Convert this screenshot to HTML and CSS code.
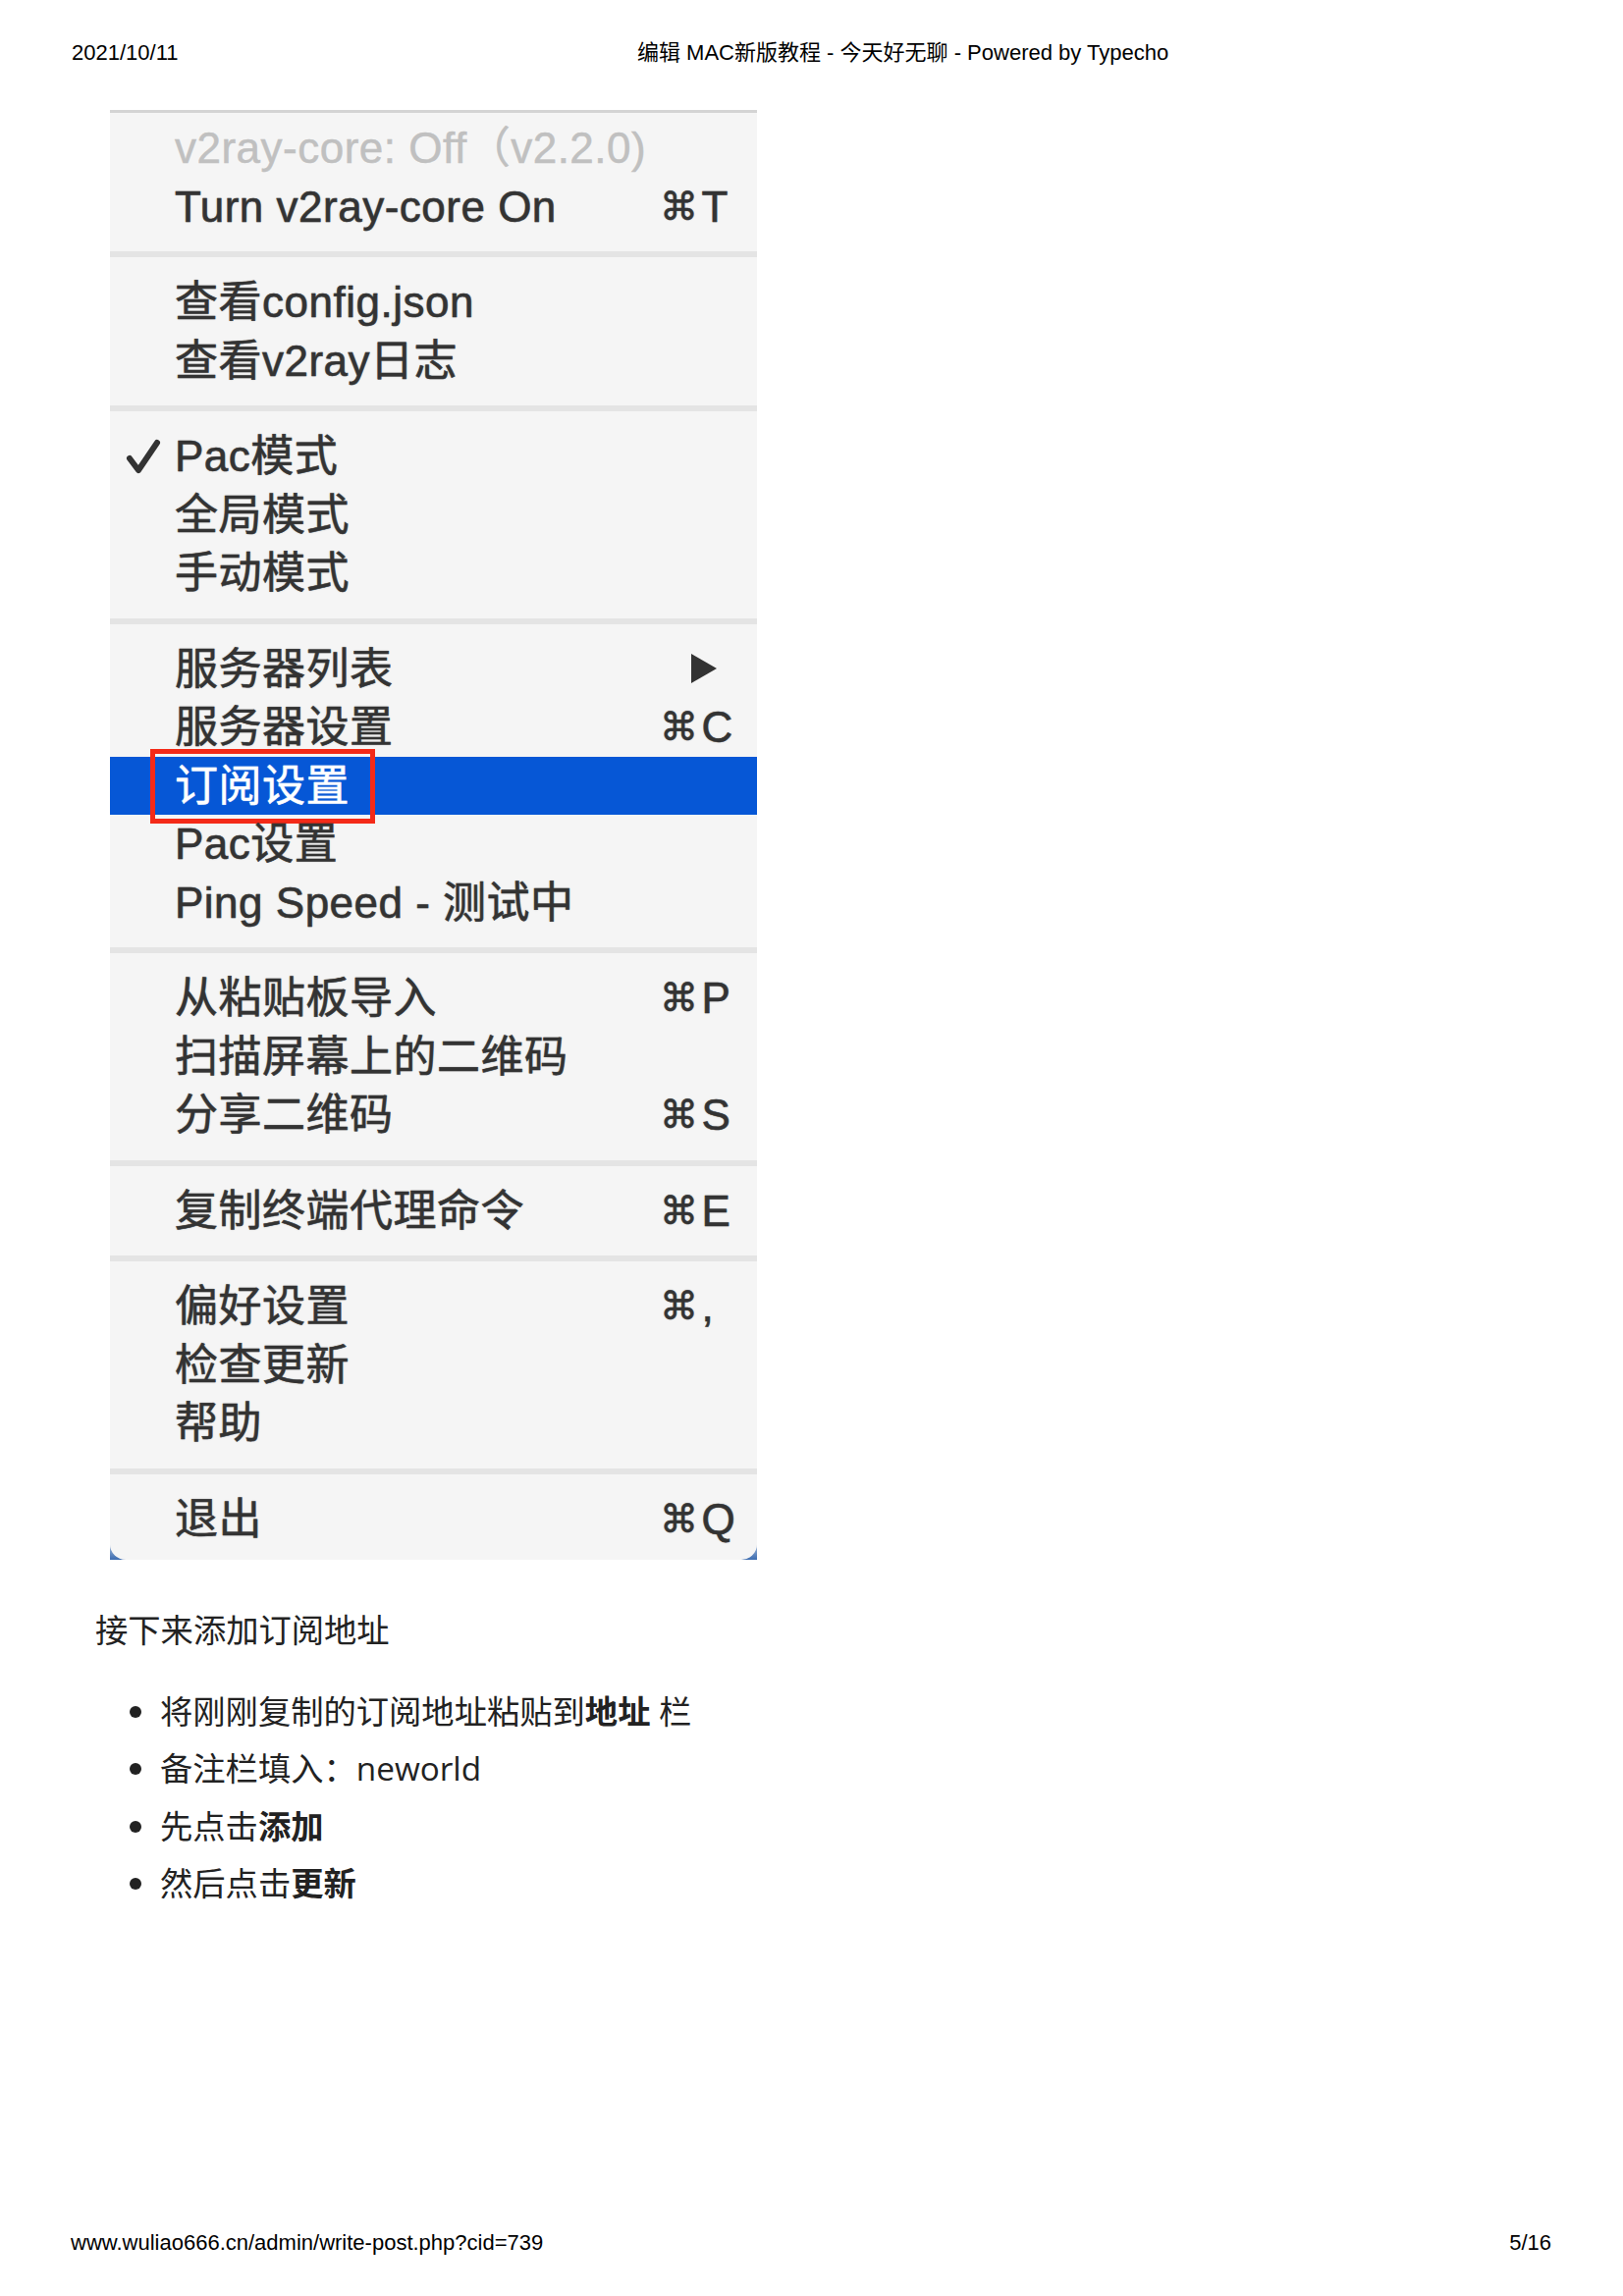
FILE: index.html
```html
<!DOCTYPE html>
<html lang="zh-CN">
<head>
    <meta charset="UTF-8">
    <title>编辑 MAC新版教程 - 今天好无聊 - Powered by Typecho</title>
    <link rel="stylesheet" href="styles.css">
</head>
<body>
<div class="page">

    <header class="print-header">
        <span>2021/10/11</span>
        <span>编辑 MAC新版教程 - 今天好无聊 - Powered by Typecho</span>
    </header>

    <main class="post">
        <!-- screenshot of the V2RayX status menu -->
        <div class="shot">
            <div class="menu">
                <div class="item disabled"><span class="label">v2ray-core: Off（v2.2.0)</span></div>
                <div class="item"><span class="label">Turn v2ray-core On</span><span class="key"><span class="cmd">⌘</span>T</span></div>
                <div class="sep"></div>
                <div class="item"><span class="label">查看config.json</span></div>
                <div class="item"><span class="label">查看v2ray日志</span></div>
                <div class="sep"></div>
                <div class="item">
                    <span class="mark">
                        <svg width="36" height="38" viewBox="0 0 36 38"><path d="M4 21 L13 33 L32 5" fill="none" stroke="#333" stroke-width="6" stroke-linecap="round" stroke-linejoin="round"/></svg>
                    </span>
                    <span class="label">Pac模式</span>
                </div>
                <div class="item"><span class="label">全局模式</span></div>
                <div class="item"><span class="label">手动模式</span></div>
                <div class="sep"></div>
                <div class="item"><span class="label">服务器列表</span><span class="key"><span class="arrow"></span></span></div>
                <div class="item"><span class="label">服务器设置</span><span class="key"><span class="cmd">⌘</span>C</span></div>
                <div class="item active"><span class="label">订阅设置</span><span class="callout"></span></div>
                <div class="item"><span class="label">Pac设置</span></div>
                <div class="item"><span class="label">Ping Speed - 测试中</span></div>
                <div class="sep"></div>
                <div class="item"><span class="label">从粘贴板导入</span><span class="key"><span class="cmd">⌘</span>P</span></div>
                <div class="item"><span class="label">扫描屏幕上的二维码</span></div>
                <div class="item"><span class="label">分享二维码</span><span class="key"><span class="cmd">⌘</span>S</span></div>
                <div class="sep"></div>
                <div class="item"><span class="label">复制终端代理命令</span><span class="key"><span class="cmd">⌘</span>E</span></div>
                <div class="sep"></div>
                <div class="item"><span class="label">偏好设置</span><span class="key"><span class="cmd">⌘</span>,</span></div>
                <div class="item"><span class="label">检查更新</span></div>
                <div class="item"><span class="label">帮助</span></div>
                <div class="sep"></div>
                <div class="item"><span class="label">退出</span><span class="key"><span class="cmd">⌘</span>Q</span></div>
            </div>
        </div>

        <p>接下来添加订阅地址</p>
        <ul>
            <li>将刚刚复制的订阅地址粘贴到<strong>地址</strong> 栏</li>
            <li>备注栏填入：neworld</li>
            <li>先点击<strong>添加</strong></li>
            <li>然后点击<strong>更新</strong></li>
        </ul>
    </main>

    <footer class="print-footer">
        <span>www.wuliao666.cn/admin/write-post.php?cid=739</span>
        <span>5/16</span>
    </footer>

</div>
</body>
</html>
```

FILE: styles.css
```css
/* Page */
body {
    margin: 0;
    background: #fff;
    color: #000;
}

.page {
    min-height: 2339px;
    display: flex;
    flex-direction: column;
}

/* print header / footer */
.print-header,
.print-footer {
    font-family: "Liberation Sans", "Noto Sans CJK SC", sans-serif;
    font-size: 22px;
    line-height: 24px;
}

.print-header {
    display: grid;
    grid-template-columns: 576px auto;
    padding: 42px 0 0 73px;
}

.print-footer {
    display: flex;
    justify-content: space-between;
    margin-top: auto;
    padding: 0 73px 42px 72px;
}

/* Post body */
.post {
    padding-left: 97px;
    font-family: "Open Sans", "Noto Sans CJK SC", sans-serif;
    font-size: 33.3px;
    color: #222;
}

.post p {
    margin: 42px 0 0;
    line-height: 58.6px;
}

.post ul {
    margin: 24px 0 0;
    padding-left: 66px;
}

.post li {
    line-height: 58.6px;
}

.post strong {
    font-weight: 700;
}

/* Menu screenshot */
.shot {
    width: 659px;
    margin: 46px 0 0 15px;
    background: linear-gradient(#fff 0, #fff calc(100% - 20px), #7f9fca calc(100% - 10px), #3c6cb0 100%);
}

.menu {
    background: #f5f5f5;
    border-top: 3px solid #d4d4d4;
    border-radius: 0 0 16px 16px;
    padding: 6px 0 12px;
    font-family: "Liberation Sans", "Noto Sans CJK SC", sans-serif;
    font-size: 44px;
    letter-spacing: 0.5px;
    color: #333;
    -webkit-text-stroke: 0.5px currentColor;
    text-shadow: 0 0 1.5px rgba(40, 40, 40, 0.45);
}

.item {
    position: relative;
    display: grid;
    grid-template-columns: 66px 1fr 99px;
    align-items: center;
    height: 59.5px;
    line-height: 59.5px;
    white-space: nowrap;
}

.item .label {
    grid-column: 2;
}

.item .mark {
    grid-column: 1;
    display: flex;
    justify-content: flex-end;
    padding-right: 14px;
}

.item .mark svg {
    display: block;
}

.item .key {
    grid-column: 3;
    display: flex;
    align-items: center;
}

.key .cmd {
    font-family: "DejaVu Sans", sans-serif;
    font-size: 39px;
    margin-right: 3px;
}

.key .arrow {
    width: 0;
    height: 0;
    margin-left: 32px;
    border-left: 26px solid #333;
    border-top: 15px solid transparent;
    border-bottom: 15px solid transparent;
}

.item.disabled {
    color: #c0c0c0;
    text-shadow: none;
}

.item.active {
    background: #0657d6;
    color: #fff;
    text-shadow: 0 0 1.5px rgba(255, 255, 255, 0.4);
}

/* red box drawn over the highlighted row */
.callout {
    position: absolute;
    left: 41px;
    top: -8px;
    width: 229px;
    height: 76px;
    box-sizing: border-box;
    border: 5px solid #f42a18;
}

.sep {
    height: 6px;
    margin: 16px 0;
    background: #e4e4e4;
}
```
